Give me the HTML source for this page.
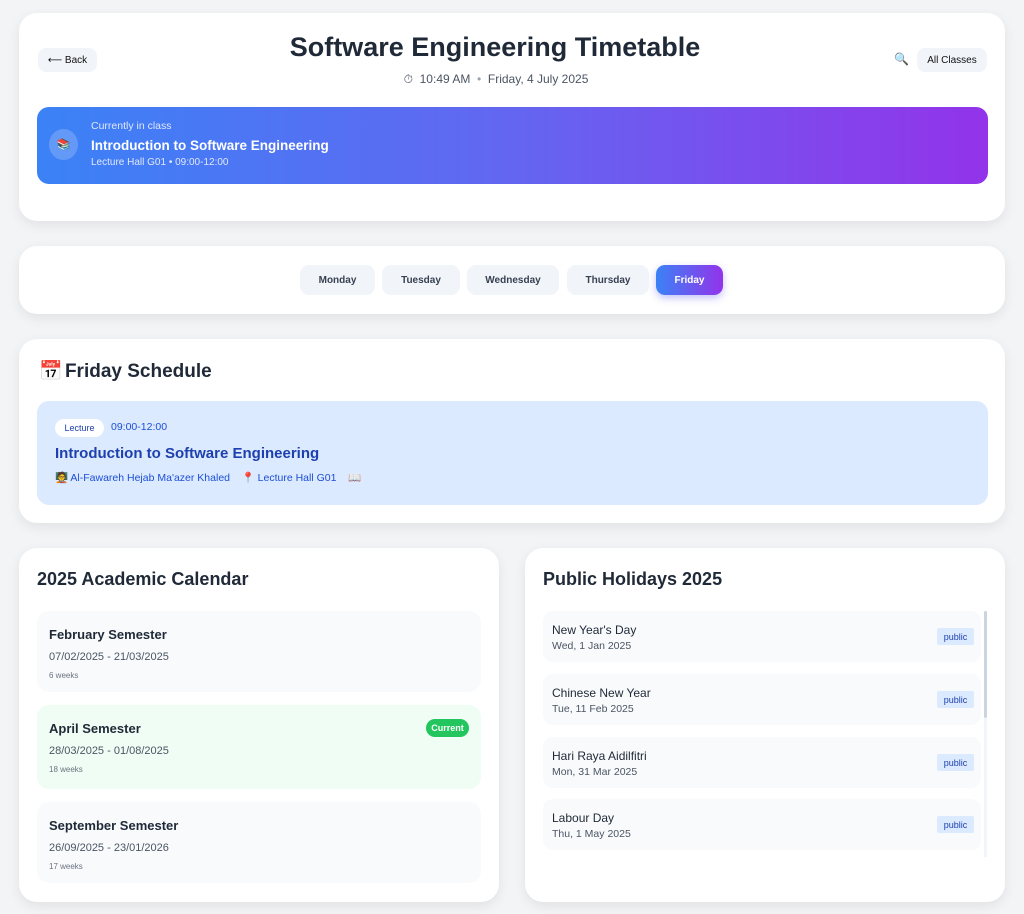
<!DOCTYPE html>
<html><head><meta charset="utf-8"><style>
*{box-sizing:border-box;margin:0;padding:0}
body{width:1024px;height:914px;background:#f3f4f6;font-family:"Liberation Sans","DejaVu Sans",sans-serif;color:#1f2937;position:relative;overflow:hidden}
.card{position:absolute;background:#fff;border-radius:18px;box-shadow:0 4px 12px rgba(0,0,0,.08)}
.abs{position:absolute}
.btn{position:absolute;background:#f1f5f9;border-radius:8px;font-size:10px;color:#111;display:flex;align-items:center;justify-content:center}
.day{position:absolute;top:265px;height:30px;border-radius:9px;background:#f1f5f9;font-size:10px;font-weight:bold;color:#374151;display:flex;align-items:center;justify-content:center}
.sem{position:absolute;left:37px;width:444px;border-radius:12px;background:#f8fafc}
.sem b{position:absolute;left:12px;top:16px;font-size:13px;color:#1f2937}
.sem .d{position:absolute;left:12px;top:40px;font-size:11px;color:#4b5563}
.sem .w{position:absolute;left:12px;top:60px;font-size:8px;color:#6b7280}
.hol{position:absolute;left:543px;width:438px;height:51px;border-radius:10px;background:#f8fafc}
.hol b{position:absolute;left:9px;top:12px;font-size:12px;font-weight:normal;color:#1f2937}
.hol span{position:absolute;left:9px;top:29px;font-size:10.5px;color:#4b5563}
.hol i{position:absolute;right:7px;top:17px;width:37px;height:17px;background:#dbeafe;color:#1e40af;font-style:normal;font-size:9px;display:flex;align-items:center;justify-content:center;border-radius:2px}
</style></head><body>
<div class="card" style="left:19px;top:13px;width:986px;height:208px"></div>
<div class="btn" style="left:38px;top:48px;width:59px;height:24px">⟵ Back</div>
<div class="abs" style="left:0;width:990px;top:32px;text-align:center;font-size:27px;font-weight:bold;color:#1f2937">Software Engineering Timetable</div>
<div class="abs" style="left:0;width:992px;top:72px;text-align:center;font-size:12px;color:#4b5563">⏱&nbsp; 10:49 AM &nbsp;<span style="color:#9ca3af">•</span>&nbsp; Friday, 4 July 2025</div>
<div class="abs" style="left:894px;top:52px;font-size:12px">🔍</div>
<div class="btn" style="left:917px;top:48px;width:70px;height:24px">All Classes</div>
<div class="abs" style="left:37px;top:107px;width:951px;height:77px;border-radius:12px;background:linear-gradient(90deg,#3b82f6,#6366f1 50%,#9333ea)">
 <div class="abs" style="left:12px;top:22px;width:29px;height:31px;border-radius:50%;background:rgba(255,255,255,.2);font-size:11px;display:flex;align-items:center;justify-content:center">📚</div>
 <div class="abs" style="left:54px;top:13px;font-size:10.5px;color:#e0e7ff">Currently in class</div>
 <div class="abs" style="left:54px;top:31px;font-size:13.5px;font-weight:bold;color:#fff">Introduction to Software Engineering</div>
 <div class="abs" style="left:54px;top:50px;font-size:10px;color:#e0e7ff">Lecture Hall G01 • 09:00-12:00</div>
</div>

<div class="card" style="left:19px;top:246px;width:986px;height:68px"></div>
<div class="day" style="left:300px;width:75px">Monday</div>
<div class="day" style="left:382px;width:78px">Tuesday</div>
<div class="day" style="left:467px;width:92px">Wednesday</div>
<div class="day" style="left:567px;width:82px">Thursday</div>
<div class="day" style="left:656px;width:67px;color:#fff;background:linear-gradient(90deg,#3b82f6,#9333ea);box-shadow:0 3px 8px rgba(99,102,241,.4)">Friday</div>

<div class="card" style="left:19px;top:339px;width:986px;height:184px"></div>
<div class="abs" style="left:39px;top:359px;font-size:19px;font-weight:bold;color:#1f2937">📅<span style="margin-left:-3px"> Friday Schedule</span></div>
<div class="abs" style="left:37px;top:401px;width:951px;height:104px;border-radius:12px;background:#dbeafe">
 <div class="abs" style="left:18px;top:18px;width:49px;height:18px;border-radius:9px;background:#fff;color:#1e40af;font-size:9px;display:flex;align-items:center;justify-content:center">Lecture</div>
 <div class="abs" style="left:74px;top:20px;font-size:10.5px;color:#1d4ed8">09:00-12:00</div>
 <div class="abs" style="left:18px;top:44px;font-size:15px;font-weight:bold;color:#1e40af">Introduction to Software Engineering</div>
 <div class="abs" style="left:18px;top:70px;font-size:10.5px;color:#1d4ed8">🧑‍🏫 Al-Fawareh Hejab Ma'azer Khaled &nbsp;&nbsp; 📍 Lecture Hall G01 &nbsp;&nbsp; 📖</div>
</div>

<div class="card" style="left:19px;top:548px;width:480px;height:354px"></div>
<div class="abs" style="left:37px;top:569px;font-size:18px;font-weight:bold">2025 Academic Calendar</div>
<div class="sem" style="top:611px;height:81px"><b>February Semester</b><div class="d">07/02/2025 - 21/03/2025</div><div class="w">6 weeks</div></div>
<div class="sem" style="top:705px;height:84px;background:#f0fdf4"><b>April Semester</b><div class="d">28/03/2025 - 01/08/2025</div><div class="w">18 weeks</div>
 <div class="abs" style="right:12px;top:14px;width:43px;height:18px;border-radius:9px;background:#22c55e;color:#fff;font-size:9px;font-weight:bold;display:flex;align-items:center;justify-content:center">Current</div></div>
<div class="sem" style="top:802px;height:81px"><b>September Semester</b><div class="d">26/09/2025 - 23/01/2026</div><div class="w">17 weeks</div></div>

<div class="card" style="left:525px;top:548px;width:480px;height:354px"></div>
<div class="abs" style="left:543px;top:569px;font-size:18px;font-weight:bold">Public Holidays 2025</div>
<div class="hol" style="top:611px"><b>New Year's Day</b><span>Wed, 1 Jan 2025</span><i>public</i></div>
<div class="hol" style="top:674px"><b>Chinese New Year</b><span>Tue, 11 Feb 2025</span><i>public</i></div>
<div class="hol" style="top:737px"><b>Hari Raya Aidilfitri</b><span>Mon, 31 Mar 2025</span><i>public</i></div>
<div class="hol" style="top:799px"><b>Labour Day</b><span>Thu, 1 May 2025</span><i>public</i></div>
<div class="abs" style="left:984px;top:611px;width:3px;height:246px;background:#f1f5f9"></div>
<div class="abs" style="left:984px;top:611px;width:3px;height:107px;background:#cbd5e1;border-radius:2px"></div>
</body></html>
